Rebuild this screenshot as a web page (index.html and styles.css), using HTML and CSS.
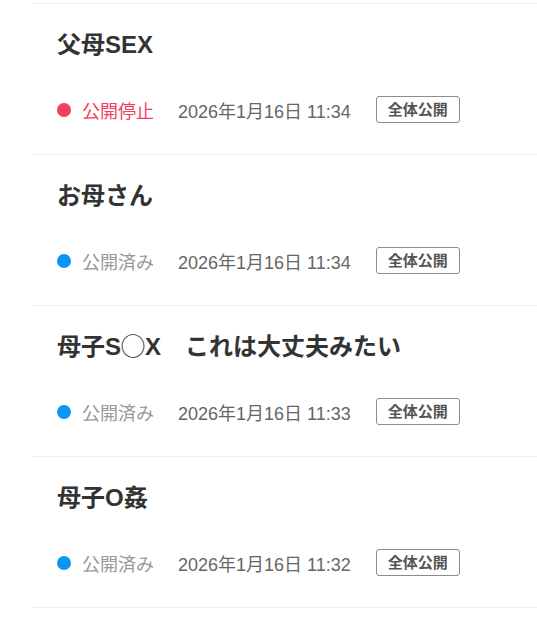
FILE: index.html
```html
<!DOCTYPE html>
<html lang="ja">
<head>
<meta charset="utf-8">
<title>記事一覧</title>
<link rel="stylesheet" href="styles.css">
</head>
<body>
<ul class="list">
  <li class="item">
    <h2 class="title">父母SEX</h2>
    <div class="meta">
      <span class="dot dot-stopped"></span>
      <span class="status status-stopped">公開停止</span>
      <span class="date">2026年1月16日 11:34</span>
      <span class="badge">全体公開</span>
    </div>
  </li>
  <li class="item">
    <h2 class="title">お母さん</h2>
    <div class="meta">
      <span class="dot dot-published"></span>
      <span class="status status-published">公開済み</span>
      <span class="date">2026年1月16日 11:34</span>
      <span class="badge">全体公開</span>
    </div>
  </li>
  <li class="item">
    <h2 class="title">母子S◯X　これは大丈夫みたい</h2>
    <div class="meta">
      <span class="dot dot-published"></span>
      <span class="status status-published">公開済み</span>
      <span class="date">2026年1月16日 11:33</span>
      <span class="badge">全体公開</span>
    </div>
  </li>
  <li class="item">
    <h2 class="title">母子O姦</h2>
    <div class="meta">
      <span class="dot dot-published"></span>
      <span class="status status-published">公開済み</span>
      <span class="date">2026年1月16日 11:32</span>
      <span class="badge">全体公開</span>
    </div>
  </li>
</ul>
</body>
</html>
```
FILE: styles.css
```css
html, body {
  margin: 0;
  padding: 0;
  background: #fff;
}

body {
  font-family: "Liberation Sans", "Noto Sans CJK JP", sans-serif;
  color: #333;
}

.list {
  list-style: none;
  margin: 0 0 0 32px;
  padding: 3px 0 0 0;
}

.item {
  border-top: 1px solid #efefef;
  padding: 25px 0 31px 25px;
  display: flex;
  flex-direction: column;
  gap: 35px;
}

.item:last-child {
  border-bottom: 1px solid #efefef;
}

.title {
  margin: 0;
  font-size: 24px;
  line-height: 32px;
  font-weight: bold;
  color: #333;
}

.meta {
  display: flex;
  align-items: center;
  height: 27px;
  font-size: 18px;
}

.dot {
  width: 14px;
  height: 14px;
  border-radius: 50%;
  flex: none;
  margin-right: 11px;
}

.dot-stopped {
  background: #f33c5e;
}

.dot-published {
  background: #0a96f5;
}

.status {
  margin-right: 24px;
}

.status-stopped {
  color: #f0405f;
}

.status-published {
  color: #999;
}

.date {
  color: #666;
  margin-right: 25px;
}

.badge {
  display: inline-block;
  box-sizing: border-box;
  height: 27px;
  line-height: 25px;
  padding: 0 11px;
  border: 1px solid #8c8c8c;
  border-radius: 3px;
  font-size: 15px;
  font-weight: bold;
  color: #555;
}
```
